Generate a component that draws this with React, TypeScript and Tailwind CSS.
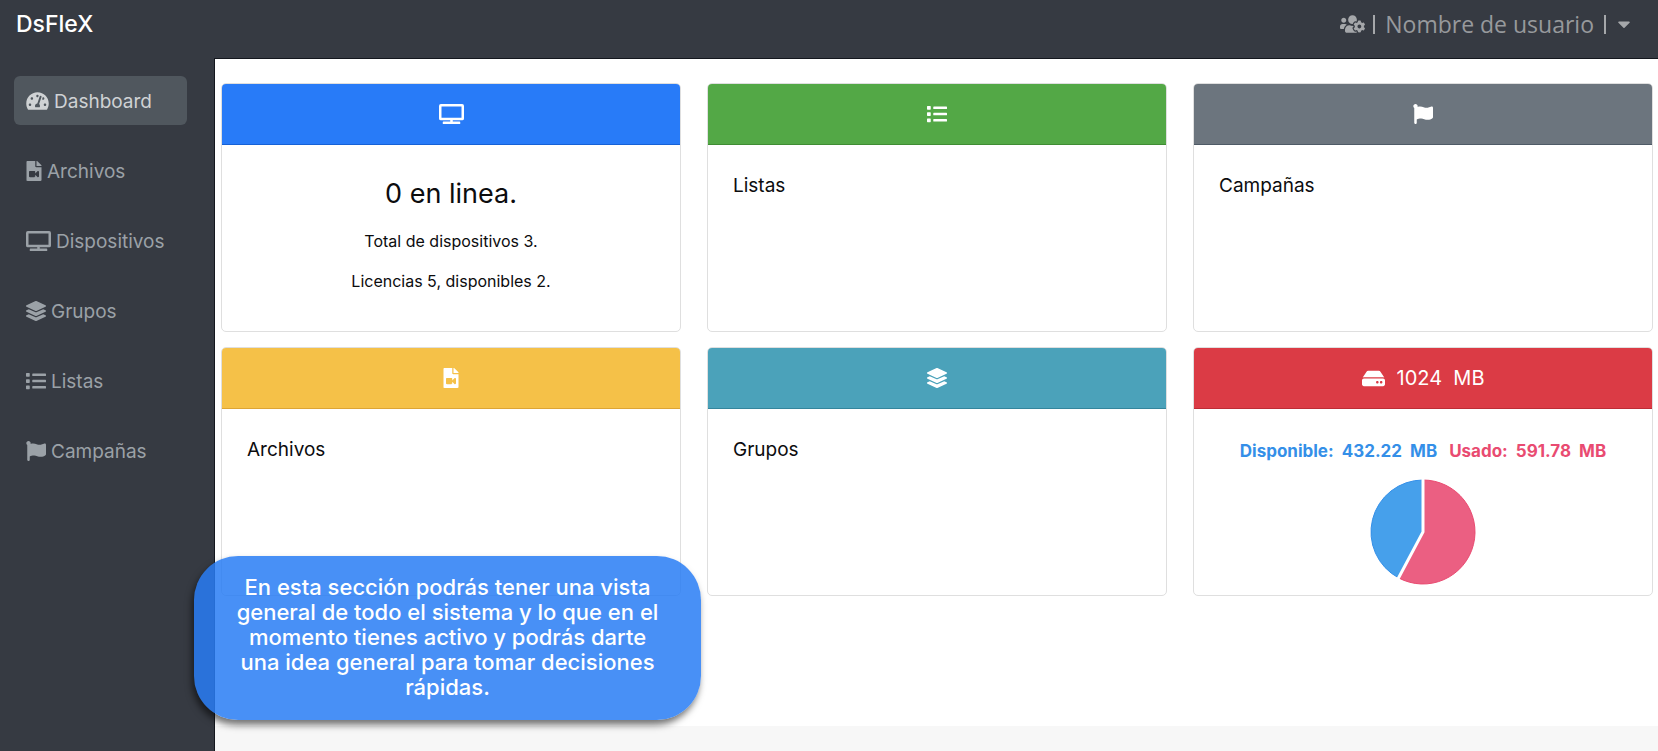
import type { ReactNode } from "react";
import type { IconType } from "react-icons";
import {
  FaCaretDown,
  FaFileVideo,
  FaFlag,
  FaHdd,
  FaLayerGroup,
  FaList,
  FaTachometerAlt,
  FaTv,
  FaUsersCog,
} from "react-icons/fa";

type NavItem = { label: string; icon: IconType; iconClass: string; active?: boolean };

const navItems: NavItem[] = [
  { label: "Dashboard", icon: FaTachometerAlt, iconClass: "h-5 w-[23px]", active: true },
  { label: "Archivos", icon: FaFileVideo, iconClass: "h-5 w-4" },
  { label: "Dispositivos", icon: FaTv, iconClass: "h-5 w-[25px]" },
  { label: "Grupos", icon: FaLayerGroup, iconClass: "h-5 w-5" },
  { label: "Listas", icon: FaList, iconClass: "h-5 w-5" },
  { label: "Campañas", icon: FaFlag, iconClass: "h-5 w-5" },
];

type CardProps = { headerClass: string; header: ReactNode; children: ReactNode };

function Card({ headerClass, header, children }: CardProps) {
  return (
    <section className="flex min-h-[249px] flex-col overflow-hidden rounded-[5px] border border-[#dfdfdf] bg-white">
      <header
        className={`flex h-[61px] shrink-0 items-center justify-center border-b text-xl text-white ${headerClass}`}
      >
        {header}
      </header>
      <div className="flex-1 px-[25px] pb-2 pt-6">{children}</div>
    </section>
  );
}

function CardTitle({ children }: { children: ReactNode }) {
  return <h2 className="text-[19px] leading-[34px]">{children}</h2>;
}

const USED = 591.78;
const TOTAL = 1024;

function StoragePie() {
  const angle = (USED / TOTAL) * 2 * Math.PI;
  const r = 52;
  const x = 53 + r * Math.sin(angle);
  const y = 53 - r * Math.cos(angle);
  return (
    <svg viewBox="0 0 106 106" className="h-[106px] w-[106px]" role="img" aria-label="Uso de disco">
      <path d={`M53 53V1A${r} ${r} 0 1 1 ${x} ${y}Z`} fill="#eb5f82" stroke="#e94b71" />
      <path d={`M53 53L${x} ${y}A${r} ${r} 0 0 1 53 1Z`} fill="#46a0eb" stroke="#348fe8" />
      <path d={`M53 0V53L${53 + (x - 53) * 1.03} ${53 + (y - 53) * 1.03}`} fill="none" stroke="#fff" strokeWidth="3" />
    </svg>
  );
}

export default function App() {
  return (
    <div className="relative flex min-h-screen flex-col bg-[#363a42] font-['Inter',sans-serif] text-[#0c0c0e]">
      <header className="flex h-[58px] items-start justify-between pl-4 pr-6">
        <a href="#" className="pt-2 text-[23px] font-medium leading-8 text-white">
          DsFleX
        </a>
        <button type="button" className="flex h-12 items-center text-[#a5a7aa]">
          <FaUsersCog className="h-5 w-[25px]" />
          <span className="ml-2 h-[19px] w-[2px] bg-[#a5a7aa]" />
          <span className="ml-[10px] font-['Open_Sans',sans-serif] text-[23px] leading-8 text-[#97999c]">
            Nombre de usuario
          </span>
          <span className="ml-[10px] h-[19px] w-[2px] bg-[#a5a7aa]" />
          <FaCaretDown className="ml-2 h-5 w-5" />
        </button>
      </header>

      <div className="flex flex-1">
        <nav className="flex w-[214px] shrink-0 flex-col gap-[21px] pl-[14px] pr-[27px] pt-[18px]">
          {navItems.map(({ label, icon: Icon, iconClass, active }) => (
            <a
              key={label}
              href="#"
              aria-current={active ? "page" : undefined}
              className={`flex h-[49px] items-center gap-[5px] rounded-md px-3 text-[19px] leading-7 ${
                active ? "bg-[#50575e] text-[#cfd2d4]" : "text-[#9ba1a7]"
              }`}
            >
              <Icon className={`shrink-0 ${iconClass}`} />
              <span className="pt-[2px]">{label}</span>
            </a>
          ))}
        </nav>

        <div className="flex min-w-0 flex-1 flex-col border-l border-t border-[#14171e] bg-white">
          <main className="grid flex-1 grid-cols-3 content-start gap-x-[26px] gap-y-[15px] pb-8 pl-[6px] pr-[5px] pt-6">
            <Card headerClass="bg-[#287bf8] border-[#1661d6]" header={<FaTv className="h-5 w-[25px]" />}>
              <div className="flex flex-col items-center text-center">
                <h2 className="pt-2 text-[27px] leading-[34px]">0 en linea.</h2>
                <p className="pt-[18px] text-base leading-6">Total de dispositivos 3.</p>
                <p className="pt-4 text-base leading-6">Licencias 5, disponibles 2.</p>
              </div>
            </Card>
            <Card headerClass="bg-[#53a846] border-[#3f8c33]" header={<FaList className="h-5 w-5" />}>
              <CardTitle>Listas</CardTitle>
            </Card>
            <Card headerClass="bg-[#6c757e] border-[#4e5a66]" header={<FaFlag className="h-5 w-5" />}>
              <CardTitle>Campañas</CardTitle>
            </Card>
            <Card headerClass="bg-[#f5c148] border-[#dda535]" header={<FaFileVideo className="h-5 w-4" />}>
              <CardTitle>Archivos</CardTitle>
            </Card>
            <Card headerClass="bg-[#4ba2ba] border-[#34859c]" header={<FaLayerGroup className="h-5 w-5" />}>
              <CardTitle>Grupos</CardTitle>
            </Card>
            <Card
              headerClass="bg-[#db3b45] border-[#bd2c35]"
              header={
                <>
                  <FaHdd className="mr-3 h-[23px] w-[23px]" />
                  <span className="whitespace-pre">1024  MB</span>
                </>
              }
            >
              <div className="flex flex-col items-center pt-[6px]">
                <p className="flex gap-3 whitespace-pre text-[17px] font-bold leading-6">
                  <span className="text-[#348fe8]">Disponible:  432.22  MB</span>
                  <span className="text-[#e94b71]">Usado:  591.78  MB</span>
                </p>
                <div className="pt-4">
                  <StoragePie />
                </div>
              </div>
            </Card>
          </main>
          <footer className="h-[25px] bg-[#f7f7f7]" />
        </div>
      </div>

      <aside
        role="note"
        className="absolute left-[194px] top-[556px] w-[507px] rounded-[44px] bg-[#287df5]/85 px-[38px] pb-5 pt-[19px] text-center text-[22px] font-medium leading-[25px] text-white shadow-[-2px_5px_7px_rgba(0,0,0,0.55)]"
      >
        En esta sección podrás tener una vista general de todo el sistema y lo que en el momento tienes activo y
        podrás darte una idea general para tomar decisiones rápidas.
      </aside>
    </div>
  );
}
